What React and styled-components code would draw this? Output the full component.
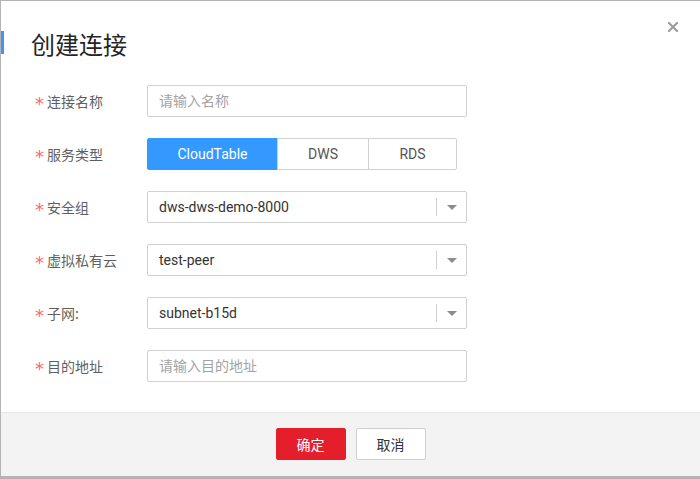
import React, { useState } from 'react'
import styled, { createGlobalStyle } from 'styled-components'

const GlobalStyle = createGlobalStyle`
  html, body {
    margin: 0;
    padding: 0;
    background: #b4b4b4;
  }
  * {
    box-sizing: border-box;
  }
`

const fontStack = `Roboto, "Noto Sans CJK SC", "Noto Sans", sans-serif`

function App() {
  const [service, setService] = useState('CloudTable')
  const services = [
    { name: 'CloudTable', width: 131 },
    { name: 'DWS', width: 92 },
    { name: 'RDS', width: 89 },
  ]

  return (
    <>
      <GlobalStyle />
      <Modal>
        <Body>
          <Header>
            <Title>创建连接</Title>
            <Close aria-label="close">
              <svg width="10" height="10" viewBox="0 0 10 10">
                <path d="M1 1L9 9M9 1L1 9" stroke="#9a9a9a" strokeWidth="2" strokeLinecap="square" />
              </svg>
            </Close>
          </Header>

          <Form>
            <Row>
              <Label><Star>*</Star>连接名称</Label>
              <Input placeholder="请输入名称" />
            </Row>
            <Row>
              <Label><Star>*</Star>服务类型</Label>
              <Segments>
                {services.map((s) => (
                  <Segment key={s.name} $active={service === s.name} $w={s.width} onClick={() => setService(s.name)}>
                    {s.name}
                  </Segment>
                ))}
              </Segments>
            </Row>
            <Row>
              <Label><Star>*</Star>安全组</Label>
              <Select value="dws-dws-demo-8000" />
            </Row>
            <Row>
              <Label><Star>*</Star>虚拟私有云</Label>
              <Select value="test-peer" />
            </Row>
            <Row>
              <Label><Star>*</Star>子网:</Label>
              <Select value="subnet-b15d" />
            </Row>
            <Row>
              <Label><Star>*</Star>目的地址</Label>
              <Input placeholder="请输入目的地址" />
            </Row>
          </Form>
        </Body>
        <Footer>
          <Button $primary>确定</Button>
          <Button>取消</Button>
        </Footer>
      </Modal>
    </>
  )
}

function Select({ value }) {
  return (
    <SelectBox>
      <SelectValue>{value}</SelectValue>
      <Divider />
      <Arrow>
        <svg width="10" height="5" viewBox="0 0 10 5">
          <path d="M0 0H10L5 5Z" fill="#8c8c8c" />
        </svg>
      </Arrow>
    </SelectBox>
  )
}

export default App

const Modal = styled.div`
  width: 699px;
  height: 475px;
  margin: 1px 0 0 1px;
  background: #fff;
  display: flex;
  flex-direction: column;
  font-family: ${fontStack};
`

const Body = styled.div`
  flex: 1;
  padding: 27px 20px 0 34px;
`

const Header = styled.div`
  position: relative;
  display: flex;
  align-items: center;
  justify-content: space-between;
  height: 32px;
  margin-left: -4px;

  &::before {
    content: '';
    position: absolute;
    left: -30px;
    top: 3px;
    width: 3px;
    height: 23px;
    background: #3b97f3;
  }
`

const Title = styled.h1`
  margin: 0;
  font-size: 24px;
  font-weight: 400;
  color: #252525;
  line-height: 32px;
  font-family: "Noto Sans CJK SC", sans-serif;
`

const Close = styled.span`
  display: flex;
  margin-right: 2px;
  margin-top: -34px;
  cursor: pointer;
`

const Form = styled.div`
  display: flex;
  flex-direction: column;
  gap: 21px;
  margin-top: 25px;
`

const Row = styled.div`
  display: flex;
  align-items: center;
  height: 32px;
`

const Label = styled.label`
  width: 112px;
  font-size: 14px;
  color: #5f5f5f;
  font-family: "Noto Sans CJK SC", sans-serif;
  display: flex;
  align-items: center;
`

const Star = styled.span`
  color: #f56c6c;
  width: 12px;
  font-size: 18px;
  line-height: 14px;
  height: 14px;
  transform: translateY(3px);
  font-family: "DejaVu Sans", sans-serif;
`

const Input = styled.input`
  width: 320px;
  height: 32px;
  border: 1px solid #d0d0d0;
  border-radius: 2px;
  padding: 0 11px;
  font-size: 14px;
  font-family: ${fontStack};
  color: #333;
  outline: none;

  &::placeholder {
    color: #a3a3a3;
  }
`

const Segments = styled.div`
  display: flex;
  height: 32px;
`

const Segment = styled.button`
  width: ${(p) => p.$w}px;
  height: 32px;
  margin: 0;
  margin-left: ${(p) => (p.$active ? '0' : '-1px')};
  border: 1px solid ${(p) => (p.$active ? '#3399ff' : '#d0d0d0')};
  background: ${(p) => (p.$active ? '#3399ff' : '#fff')};
  color: ${(p) => (p.$active ? '#fff' : '#555')};
  font-size: 14px;
  font-family: ${fontStack};
  cursor: pointer;

  &:first-child {
    margin-left: 0;
    border-radius: 2px 0 0 2px;
  }
  &:last-child {
    border-radius: 0 2px 2px 0;
  }
`

const SelectBox = styled.div`
  width: 320px;
  height: 32px;
  border: 1px solid #d0d0d0;
  border-radius: 2px;
  display: flex;
  align-items: center;
`

const SelectValue = styled.span`
  flex: 1;
  padding-left: 11px;
  font-size: 14px;
  color: #333;
`

const Divider = styled.span`
  width: 1px;
  height: 18px;
  background: #d0d0d0;
`

const Arrow = styled.span`
  width: 29px;
  display: flex;
  justify-content: center;
  align-items: center;
`

const Footer = styled.div`
  height: 64px;
  border-top: 1px solid #e6e6e6;
  background: #f3f3f3;
  display: flex;
  justify-content: center;
  align-items: center;
  gap: 10px;
  padding-bottom: 1px;
`

const Button = styled.button`
  width: 70px;
  height: 32px;
  border-radius: 2px;
  border: 1px solid ${(p) => (p.$primary ? '#e51e2c' : '#cfcfcf')};
  background: ${(p) => (p.$primary ? '#e51e2c' : '#fff')};
  color: ${(p) => (p.$primary ? '#fff' : '#333')};
  font-size: 14px;
  font-family: "Noto Sans CJK SC", sans-serif;
  cursor: pointer;
`
